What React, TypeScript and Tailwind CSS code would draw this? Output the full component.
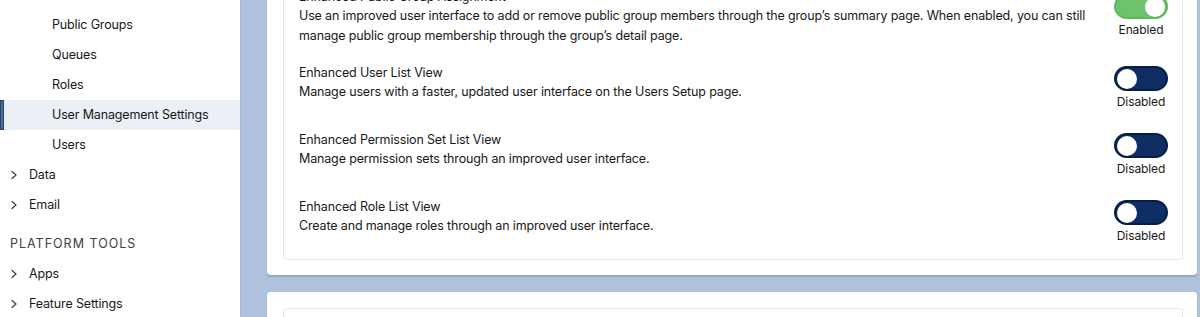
import React from "react";

type Setting = {
  title: string;
  description: string;
  enabled: boolean;
  rowClass: string; // spacing above the row
  toggleClass: string; // offset of toggle column
};

const settings: Setting[] = [
  {
    title: "Enhanced Public Group Assignment",
    description:
      "Use an improved user interface to add or remove public group members through the group’s summary page. When enabled, you can still manage public group membership through the group’s detail page.",
    enabled: true,
    rowClass: "",
    toggleClass: "mt-[6px]",
  },
  {
    title: "Enhanced User List View",
    description: "Manage users with a faster, updated user interface on the Users Setup page.",
    enabled: false,
    rowClass: "mt-[18px]",
    toggleClass: "mt-[2px]",
  },
  {
    title: "Enhanced Permission Set List View",
    description: "Manage permission sets through an improved user interface.",
    enabled: false,
    rowClass: "mt-[22px]",
    toggleClass: "mt-[2px]",
  },
  {
    title: "Enhanced Role List View",
    description: "Create and manage roles through an improved user interface.",
    enabled: false,
    rowClass: "mt-[22px]",
    toggleClass: "mt-[2px]",
  },
];

function Chevron() {
  return (
    <svg width="8" height="10" viewBox="0 0 8 10" className="shrink-0">
      <polyline
        points="2,1.5 6,5 2,8.5"
        fill="none"
        stroke="#3e3e3c"
        strokeWidth="1.2"
        strokeLinecap="round"
        strokeLinejoin="round"
      />
    </svg>
  );
}

function NavItem({ label, selected }: { label: string; selected?: boolean }) {
  return (
    <div
      className={
        "relative flex h-[30px] items-center pl-[52px] " +
        (selected ? "bg-[#eaf0f6]" : "")
      }
    >
      {selected && (
        <div className="absolute left-0 top-0 h-full w-[4px] border border-[#24456f] bg-[#4a6c99]" />
      )}
      {label}
    </div>
  );
}

function NavGroup({ label }: { label: string }) {
  return (
    <div className="flex h-[30px] items-center gap-[11px] pl-[10px]">
      <Chevron />
      {label}
    </div>
  );
}

function Toggle({ enabled }: { enabled: boolean }) {
  return (
    <div className="flex w-[54px] flex-col items-center">
      <div
        className={
          "flex h-[25px] w-[54px] items-center rounded-full border-2 px-[1px] " +
          (enabled
            ? "justify-end border-[#5fb85f] bg-[#6cc36c]"
            : "justify-start border-[#071d42] bg-[#0e2d62]")
        }
      >
        <div className="h-[20px] w-[20px] rounded-full bg-white" />
      </div>
      <span className="mt-[4px] text-[12px] leading-[14px] tracking-[-0.1px] text-[#181818]">
        {enabled ? "Enabled" : "Disabled"}
      </span>
    </div>
  );
}

export default function App() {
  return (
    <div
      className="flex h-[317px] w-[1200px] overflow-hidden bg-white text-[12.5px] tracking-[-0.15px] text-[#181818]"
      style={{ fontFamily: "Inter, 'Liberation Sans', sans-serif" }}
    >
      {/* Sidebar */}
      <aside className="w-[240px] shrink-0 bg-white pt-[10px] leading-[16px]">
        <NavItem label="Public Groups" />
        <NavItem label="Queues" />
        <NavItem label="Roles" />
        <NavItem label="User Management Settings" selected />
        <NavItem label="Users" />
        <NavGroup label="Data" />
        <NavGroup label="Email" />
        <div className="mt-[9px] flex h-[30px] items-center pl-[10px] text-[12.5px] tracking-[1px] text-[#3e3e3c]">
          PLATFORM TOOLS
        </div>
        <NavGroup label="Apps" />
        <NavGroup label="Feature Settings" />
      </aside>

      {/* Main */}
      <main className="flex-1 border-l border-[#a9b8d2] bg-[#b0c1dd] pl-[26px] pr-[3px]">
        <div className="-mt-[41px] flex flex-col gap-[17px]">
          <section className="rounded-[4px] bg-white pb-[15px] pl-[16px] pr-[14px] pt-[16px] shadow-[0_2px_1px_rgba(0,0,0,0.14)]">
            <div className="rounded-[4px] border border-[#e5e5e5] pb-[16px] pl-[15px] pr-[14px] pt-[12px]">
              {settings.map((s) => (
                <div key={s.title} className={"flex items-start justify-between " + s.rowClass}>
                  <div className="max-w-[805px]">
                    <div className="leading-[18px]">{s.title}</div>
                    <div className="leading-[20px]">{s.description}</div>
                  </div>
                  <div className={s.toggleClass}>
                    <Toggle enabled={s.enabled} />
                  </div>
                </div>
              ))}
            </div>
          </section>
          <section className="rounded-[4px] bg-white pl-[16px] pr-[14px] pt-[16px] shadow-[0_2px_1px_rgba(0,0,0,0.14)]">
            <div className="h-[80px] rounded-[4px] border border-[#e5e5e5]" />
          </section>
        </div>
      </main>
    </div>
  );
}
